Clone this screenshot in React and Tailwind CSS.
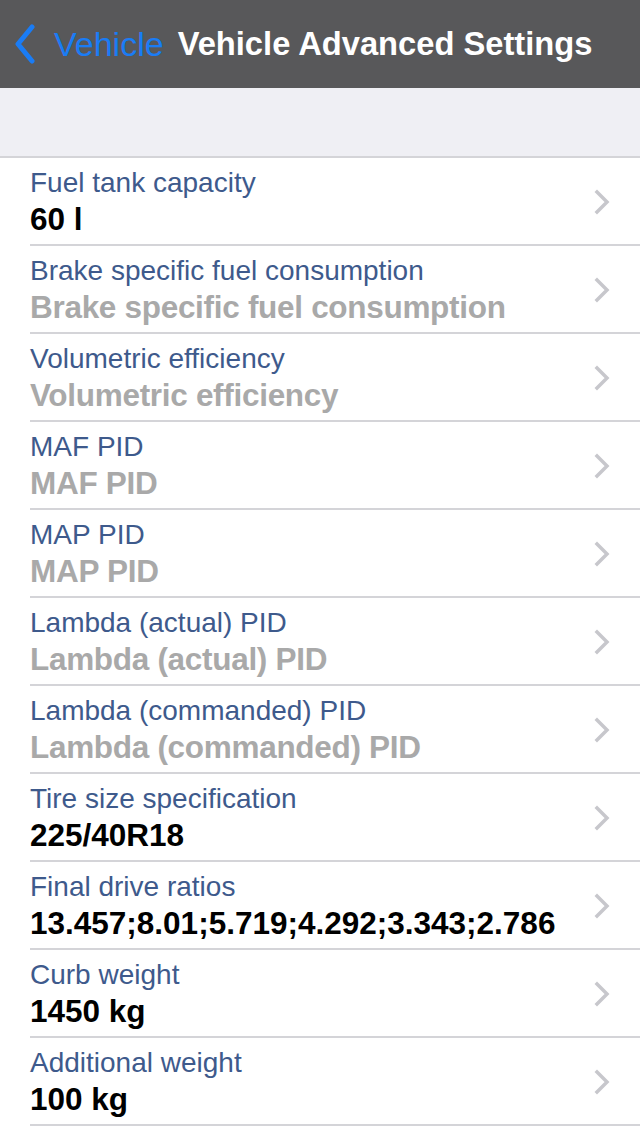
import React from 'react';

const rows = [
  { label: 'Fuel tank capacity', value: '60 l', set: true },
  { label: 'Brake specific fuel consumption', value: 'Brake specific fuel consumption', set: false },
  { label: 'Volumetric efficiency', value: 'Volumetric efficiency', set: false },
  { label: 'MAF PID', value: 'MAF PID', set: false },
  { label: 'MAP PID', value: 'MAP PID', set: false },
  { label: 'Lambda (actual) PID', value: 'Lambda (actual) PID', set: false },
  { label: 'Lambda (commanded) PID', value: 'Lambda (commanded) PID', set: false },
  { label: 'Tire size specification', value: '225/40R18', set: true },
  { label: 'Final drive ratios', value: '13.457;8.01;5.719;4.292;3.343;2.786', set: true },
  { label: 'Curb weight', value: '1450 kg', set: true },
  { label: 'Additional weight', value: '100 kg', set: true },
];

const Chevron = () => (
  <svg width="16" height="26" viewBox="0 0 16 26" className="flex-shrink-0">
    <path d="M3 3 L13 13 L3 23" fill="none" stroke="#c7c7cc" strokeWidth="3.5" strokeLinecap="square" />
  </svg>
);

const Row = ({ label, value, set }) => (
  <div className="flex items-center h-[88px] pl-[30px] pr-[30px] relative">
    <div className="flex-1 min-w-0 self-start pt-[9px]">
      <div className="text-[28px] leading-[32px] text-[#3e5a8c] whitespace-nowrap">{label}</div>
      <div className={`mt-[2px] text-[31.5px] leading-[36px] font-bold whitespace-nowrap ${set ? 'text-black' : 'text-[#a9a9a9] tracking-[-0.3px]'}`}>
        {value}
      </div>
    </div>
    <Chevron />
    <div className="absolute left-[30px] right-0 bottom-0 h-[2px] bg-[#d4d4d8]" />
  </div>
);

export default function App() {
  return (
    <div className="w-[640px] h-[1136px] bg-white overflow-hidden" style={{ fontFamily: '"Liberation Sans", Arial, sans-serif' }}>
      <div className="h-[88px] bg-[#58585a] flex items-center pl-[14px]">
        <svg width="22" height="40" viewBox="0 0 22 40" className="flex-shrink-0">
          <path d="M18 3 L4 20 L18 37" fill="none" stroke="#1a7cf5" strokeWidth="5" strokeLinecap="round" strokeLinejoin="round" />
        </svg>
        <span className="ml-[18px] text-[34px] text-[#1a7cf5]">Vehicle</span>
        <span className="ml-[14px] text-[32.7px] font-bold text-white">Vehicle Advanced Settings</span>
      </div>
      <div className="h-[70px] bg-[#efeff4] border-b-2 border-[#d4d4d8]" />
      {rows.map((r) => (
        <Row key={r.label} {...r} />
      ))}
    </div>
  );
}
